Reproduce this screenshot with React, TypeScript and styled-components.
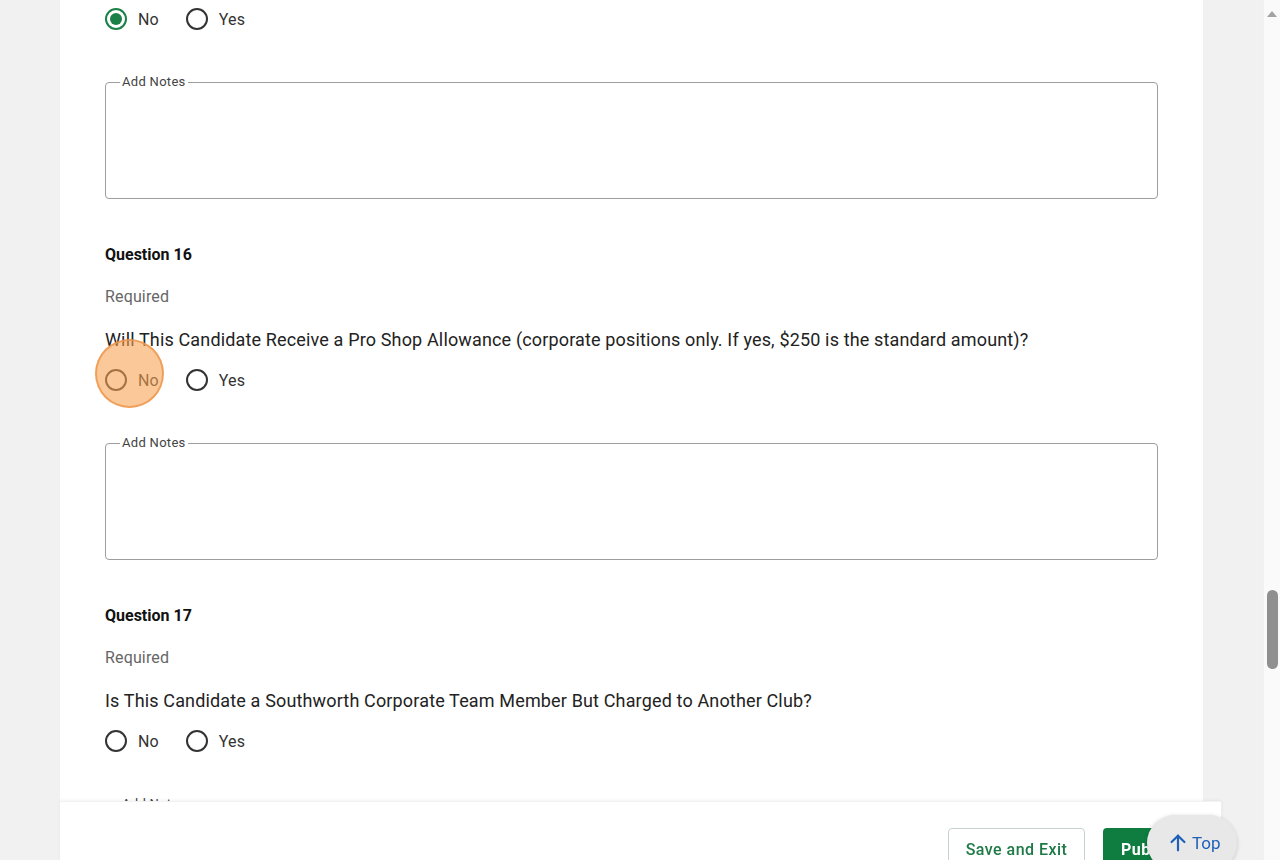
import React from "react";
import styled, { createGlobalStyle } from "styled-components";

const Global = createGlobalStyle`
  html, body { margin: 0; padding: 0; overflow: hidden; }
  body { font-family: Roboto, "Noto Sans", Arial, sans-serif; background: #f1f1f1; }
  * { box-sizing: border-box; }
`;

const Shell = styled.div`
  display: flex;
  height: 860px;
  overflow: hidden;
`;

const Main = styled.div`
  flex: 1;
  background: #f1f1f1;
  padding: 0 60px;
  overflow: hidden;
`;

const Card = styled.div`
  background: #fff;
  padding: 0 45px 200px;
  min-height: 1000px;
`;

const Block = styled.section<{ $first?: boolean }>`
  display: flex;
  flex-direction: column;
  margin-top: ${(p) => (p.$first ? "-1px" : "46px")};
`;

const Title = styled.h3`
  margin: 0;
  font-size: 16px;
  line-height: 20px;
  font-weight: 700;
  color: #111;
`;

const Req = styled.div`
  margin-top: 20px;
  font-size: 16px;
  line-height: 24px;
  color: #666;
  letter-spacing: 0.15px;
`;

const QText = styled.div`
  margin-top: 19px;
  font-size: 18px;
  line-height: 24px;
  letter-spacing: 0.15px;
  color: #222;
`;

const RadioRow = styled.div<{ $gapTop?: boolean }>`
  position: relative;
  display: flex;
  align-items: center;
  gap: 27px;
  height: 40px;
  margin-top: ${(p) => (p.$gapTop ? "8px" : "0")};
`;

const RadioItem = styled.label`
  display: flex;
  align-items: center;
  gap: 11px;
  font-size: 16px;
  letter-spacing: 0.15px;
  color: #333;
`;

const Circle = styled.span<{ $on?: boolean }>`
  width: 22px;
  height: 22px;
  border-radius: 50%;
  border: 2px solid ${(p) => (p.$on ? "#1a8048" : "#333")};
  display: flex;
  align-items: center;
  justify-content: center;
  &::after {
    content: "";
    display: ${(p) => (p.$on ? "block" : "none")};
    width: 12px;
    height: 12px;
    border-radius: 50%;
    background: #1a8048;
  }
`;

const Highlight = styled.span`
  position: absolute;
  left: -10px;
  top: -21px;
  width: 69px;
  height: 69px;
  border-radius: 50%;
  background: rgba(247, 160, 80, 0.58);
  border: 2px solid rgba(238, 150, 75, 0.8);
  pointer-events: none;
`;

const Notes = styled.fieldset`
  margin: 35px 0 0;
  padding: 0 14px;
  border: 1px solid #9e9e9e;
  border-radius: 4px;
  height: 125px;
`;

const Legend = styled.legend`
  padding: 0 2px;
  font-size: 13px;
  line-height: 16px;
  letter-spacing: 0.3px;
  color: #444;
`;

const ScrollTrack = styled.div`
  width: 17px;
  background: #fafafa;
  border-left: 1px solid #f0f0f0;
  display: flex;
  flex-direction: column;
  align-items: center;
  padding-top: 11px;
`;

const ArrowUp = styled.div`
  width: 0;
  height: 0;
  border-left: 5px solid transparent;
  border-right: 5px solid transparent;
  border-bottom: 6px solid #a3a3a3;
`;

const Thumb = styled.div`
  margin-top: 573px;
  width: 11px;
  height: 79px;
  border-radius: 6px;
  background: #8f8f8f;
`;

const Footer = styled.div`
  position: fixed;
  left: 60px;
  bottom: 0;
  width: 1162px;
  height: 59px;
  background: #fff;
  border-top: 1px solid #f2f2f2;
  border-right: 1px solid #eee;
  box-shadow: 0 -1px 3px rgba(0, 0, 0, 0.05);
  display: flex;
  justify-content: flex-end;
  align-items: flex-start;
  gap: 18px;
  padding: 26px 0 0;
  overflow: hidden;
`;

const OutlineBtn = styled.button`
  height: 42px;
  width: 137px;
  border: 1px solid #c9d3cd;
  border-radius: 4px;
  background: #fff;
  color: #1f7a47;
  font-family: Roboto, Arial, sans-serif;
  font-size: 16px;
  font-weight: 500;
  letter-spacing: 0.46px;
`;

const PrimaryBtn = styled.button`
  height: 42px;
  width: 118px;
  border: none;
  border-radius: 4px 0 0 4px;
  background: #0f7d3f;
  color: #fff;
  font-family: Roboto, Arial, sans-serif;
  font-size: 16px;
  font-weight: 700;
  letter-spacing: 0.46px;
  text-align: left;
  padding-left: 18px;
`;

const TopFab = styled.button`
  position: fixed;
  left: 1147px;
  top: 815px;
  width: 90px;
  height: 56px;
  border-radius: 28px;
  border: none;
  background: #e8e8e8;
  box-shadow: 0 1px 4px rgba(0, 0, 0, 0.18);
  display: flex;
  align-items: center;
  padding: 0 0 0 20px;
  gap: 3px;
  color: #1f5fb8;
  font-family: Roboto, Arial, sans-serif;
  font-size: 17px;
`;

const Radios = ({ selected, highlight, gapTop }: { selected?: boolean; highlight?: boolean; gapTop?: boolean }) => (
  <RadioRow $gapTop={gapTop}>
    {highlight && <Highlight />}
    <RadioItem>
      <Circle $on={selected} />
      No
    </RadioItem>
    <RadioItem>
      <Circle />
      Yes
    </RadioItem>
  </RadioRow>
);

const NotesBox = () => (
  <Notes>
    <Legend>Add Notes</Legend>
  </Notes>
);

export default function App() {
  return (
    <>
      <Global />
      <Shell>
        <Main>
          <Card>
            <Block $first>
              <Radios selected />
              <NotesBox />
            </Block>
            <Block>
              <Title>Question 16</Title>
              <Req>Required</Req>
              <QText>
                Will This Candidate Receive a Pro Shop Allowance (corporate positions only. If yes, $250 is the standard amount)?
              </QText>
              <Radios highlight gapTop />
              <NotesBox />
            </Block>
            <Block>
              <Title>Question 17</Title>
              <Req>Required</Req>
              <QText>Is This Candidate a Southworth Corporate Team Member But Charged to Another Club?</QText>
              <Radios gapTop />
              <NotesBox />
            </Block>
          </Card>
        </Main>
        <ScrollTrack>
          <ArrowUp />
          <Thumb />
        </ScrollTrack>
      </Shell>
      <Footer>
        <OutlineBtn>Save and Exit</OutlineBtn>
        <PrimaryBtn>Publish</PrimaryBtn>
      </Footer>
      <TopFab>
        <svg width="22" height="22" viewBox="0 0 24 24" fill="none" stroke="#1f5fb8" strokeWidth="2.4" strokeLinecap="round" strokeLinejoin="round">
          <path d="M12 20V4" />
          <path d="M5 11l7-7 7 7" />
        </svg>
        Top
      </TopFab>
    </>
  );
}
